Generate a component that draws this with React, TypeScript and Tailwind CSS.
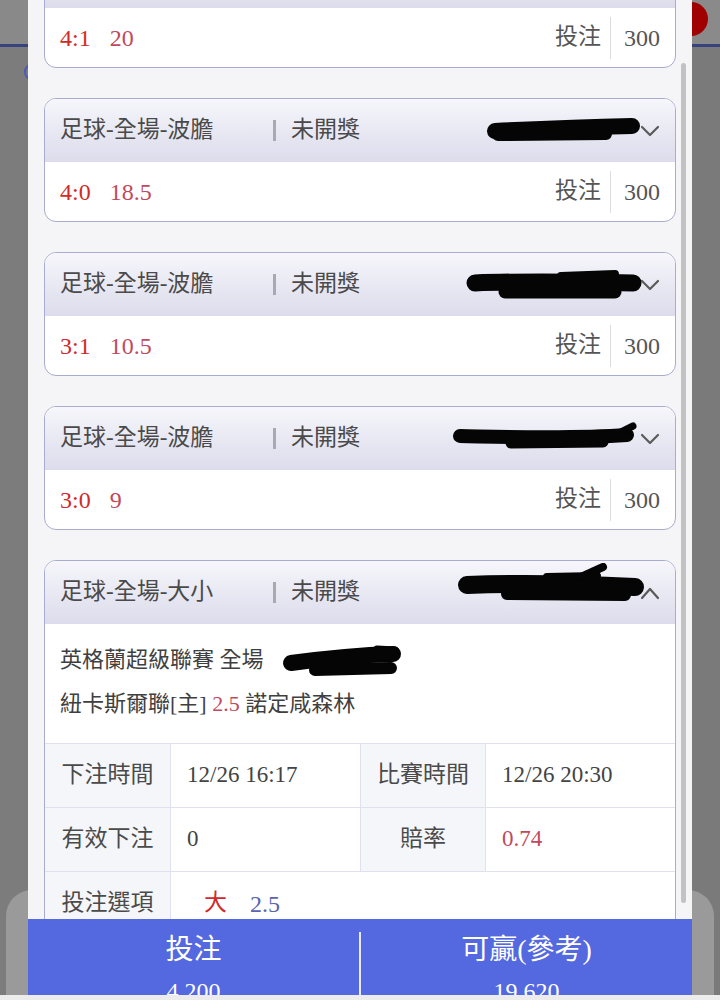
import React from "react";

const serif = "font-['Liberation_Serif','Noto_Sans_CJK_TC',serif]";

interface Stroke {
  d: string;
  w: number;
}

const Redact = ({ strokes, width, height, className }: { strokes: Stroke[]; width: number; height: number; className: string }) => (
  <svg width={width} height={height} viewBox={`0 0 ${width} ${height}`} className={className}>
    {strokes.map((s, i) => (
      <path key={i} d={s.d} stroke="#050505" strokeWidth={s.w} strokeLinecap="round" strokeLinejoin="round" fill="none" />
    ))}
  </svg>
);

const Chevron = ({ up }: { up?: boolean }) => (
  <svg width="20" height="14" viewBox="0 0 20 14" className="shrink-0">
    <polyline
      points={up ? "2,12 10,3 18,12" : "2,3 10,11 18,3"}
      fill="none"
      stroke="#5a5a5a"
      strokeWidth="2.2"
      strokeLinecap="round"
      strokeLinejoin="round"
    />
  </svg>
);

const CardHeader = ({ title, redact, up }: { title: string; redact?: React.ReactNode; up?: boolean }) => (
  <div className="relative flex h-[63px] items-center bg-gradient-to-b from-[#f6f6fb] to-[#dcdcec] pl-[15px] pr-[15px] text-[23px] text-[#4a4a4a]">
    <span className="w-[213px]">{title}</span>
    <span className="h-[21px] w-[3px] bg-[#a9a9b2]" />
    <span className="ml-[15px]">未開獎</span>
    <span className="ml-auto">
      <Chevron up={up} />
    </span>
    {redact}
  </div>
);

const BetCard = ({ title, score, odds, redact }: { title: string; score: string; odds: string; redact?: React.ReactNode }) => (
  <div className="overflow-hidden rounded-[12px] border border-[#a9acd0] bg-white">
    <CardHeader title={title} redact={redact} />
    <div className="flex h-[59px] items-center pl-[15px] pr-[15px]">
      <span className="text-[24px] text-[#d12a2a]">{score}</span>
      <span className="ml-[19px] text-[24px] text-[#c04a5c]">{odds}</span>
      <span className="ml-auto text-[23px] text-[#555]">投注</span>
      <span className="ml-[9px] h-[42px] w-[1px] bg-[#dcdcdc]" />
      <span className="ml-[13px] text-[24px] text-[#555]">300</span>
    </div>
  </div>
);

const Label = ({ children, first }: { children: React.ReactNode; first?: boolean }) => (
  <div
    className={
      first
        ? "flex w-[125px] items-center justify-center bg-[#f5f6fa] text-[23px] text-[#4a4a4a]"
        : "flex w-[125px] items-center justify-center border-l border-[#dfe1ee] bg-[#f5f6fa] text-[23px] text-[#4a4a4a]"
    }
  >
    {children}
  </div>
);

const Value = ({ children }: { children: React.ReactNode }) => (
  <div className="flex w-[190px] items-center border-l border-[#dfe1ee] pl-[16px] text-[23px] text-[#444]">{children}</div>
);

const DetailCard = () => (
  <div className="overflow-hidden rounded-[12px] border border-[#a9acd0] bg-white">
    <CardHeader
      title="足球-全場-大小"
      up
      redact={
        <Redact
          width={190}
          height={44}
          className="absolute left-[412px] top-[2px]"
          strokes={[
            { d: "M10 22 C60 20 120 21 178 24", w: 18 },
            { d: "M50 31 L168 32", w: 12 },
            { d: "M124 14 L146 4", w: 8 },
            { d: "M90 14 L140 13", w: 8 },
          ]}
        />
      }
    />
    <div className="relative pb-[17px] pl-[15px] pt-[14px] text-[22px] leading-[44px] text-[#3f3f3f]">
      <div className="h-[44px]">英格蘭超級聯賽 全場</div>
      <div className="h-[44px]">
        紐卡斯爾聯[主] <span className="text-[#c04a5c]">2.5</span> 諾定咸森林
      </div>
      <Redact
        width={124}
        height={42}
        className="absolute left-[236px] top-[15px]"
        strokes={[
          { d: "M10 24 C40 20 80 16 112 15", w: 16 },
          { d: "M34 31 L110 29", w: 12 },
          { d: "M96 11 L114 12", w: 9 },
        ]}
      />
    </div>
    <div className="flex h-[64px] border-t border-[#dfe1ee]">
      <Label first>下注時間</Label>
      <Value>12/26 16:17</Value>
      <Label>比賽時間</Label>
      <Value>12/26 20:30</Value>
    </div>
    <div className="flex h-[64px] border-t border-[#dfe1ee]">
      <Label first>有效下注</Label>
      <Value>0</Value>
      <Label>賠率</Label>
      <Value>
        <span className="text-[#c04a5c]">0.74</span>
      </Value>
    </div>
    <div className="flex h-[64px] border-t border-[#dfe1ee]">
      <Label first>投注選項</Label>
      <div className="flex flex-1 items-center border-l border-[#dfe1ee] pl-[33px] text-[23px]">
        <span className="text-[#d12a2a]">大</span>
        <span className="ml-[23px] text-[24px] text-[#5a64b0]">2.5</span>
      </div>
    </div>
  </div>
);

export default function App() {
  return (
    <div className={`h-[1000px] w-[720px] overflow-hidden bg-[#7e7e7e] ${serif}`}>
      <div className="flex h-[995px]">
        <div className="relative flex w-[28px] flex-col overflow-hidden">
          <div className="h-[44px] bg-[#898989]" />
          <div className="h-[3px] bg-[#38437e]" />
          <div className="flex-1 bg-[#7c7c7c]" />
          <svg width="16" height="24" viewBox="0 0 16 24" className="absolute left-[20px] top-[60px]">
            <circle cx="13" cy="12" r="8" fill="none" stroke="#4a5ab4" strokeWidth="2" />
          </svg>
          <div className="absolute bottom-0 left-[6px] h-[105px] w-[30px] rounded-tl-[26px] bg-[#9a9a9a]" />
        </div>

        <div className="relative z-10 flex w-[664px] flex-col bg-[#f5f5f7]">
          <div className="relative h-[919px] overflow-hidden">
            <div className="-mt-[56px] flex flex-col gap-[30px] px-[16px]">
              <BetCard title="足球-全場-波膽" score="4:1" odds="20" />
              <BetCard
                title="足球-全場-波膽"
                score="4:0"
                odds="18.5"
                redact={
                  <Redact
                    width={156}
                    height={32}
                    className="absolute left-[441px] top-[15px]"
                    strokes={[
                      { d: "M9 17 C50 15 100 13 146 12", w: 16 },
                      { d: "M12 21 L120 20", w: 12 },
                    ]}
                  />
                }
              />
              <BetCard
                title="足球-全場-波膽"
                score="3:1"
                odds="10.5"
                redact={
                  <Redact
                    width={180}
                    height={40}
                    className="absolute left-[420px] top-[12px]"
                    strokes={[
                      { d: "M10 18 C60 16 120 17 168 18", w: 17 },
                      { d: "M40 27 L150 27", w: 13 },
                      { d: "M96 11 L150 9", w: 8 },
                    ]}
                  />
                }
              />
              <BetCard
                title="足球-全場-波膽"
                score="3:0"
                odds="9"
                redact={
                  <Redact
                    width={190}
                    height={36}
                    className="absolute left-[406px] top-[13px]"
                    strokes={[
                      { d: "M9 16 C60 17 120 19 176 15", w: 14 },
                      { d: "M60 23 L152 22", w: 11 },
                      { d: "M164 15 L182 6", w: 7 },
                    ]}
                  />
                }
              />
              <DetailCard />
            </div>
            <div className="absolute left-[653px] top-[63px] h-[840px] w-[5px] rounded-full bg-[#c2c2c2]" />
          </div>

          <div className="flex h-[76px] bg-[#5468e0] text-white">
            <div className="flex flex-1 flex-col items-center overflow-hidden pt-[14px]">
              <span className="text-[28px] leading-[34px]">投注</span>
              <span className="mt-[10px] text-[24px] leading-[28px]">4,200</span>
            </div>
            <div className="mt-[13px] w-[2px] bg-[#e8ebff]" />
            <div className="flex flex-1 flex-col items-center overflow-hidden pt-[14px]">
              <span className="text-[28px] leading-[34px]">可贏(參考)</span>
              <span className="mt-[10px] text-[24px] leading-[28px]">19,620</span>
            </div>
          </div>
        </div>

        <div className="relative flex w-[28px] flex-col">
          <div className="h-[44px] bg-[#8a8a8a]" />
          <div className="h-[3px] bg-[#38437e]" />
          <div className="flex-1 bg-[#7a7a7a]" />
          <div className="absolute left-[-18px] top-[2px] h-[34px] w-[34px] rounded-full bg-[#a00000]" />
          <div className="absolute bottom-0 right-[6px] h-[105px] w-[30px] overflow-hidden rounded-tr-[26px] bg-[#9a9a9a]" />
        </div>
      </div>
      <div className="h-[5px] bg-[#ececec]" />
    </div>
  );
}
